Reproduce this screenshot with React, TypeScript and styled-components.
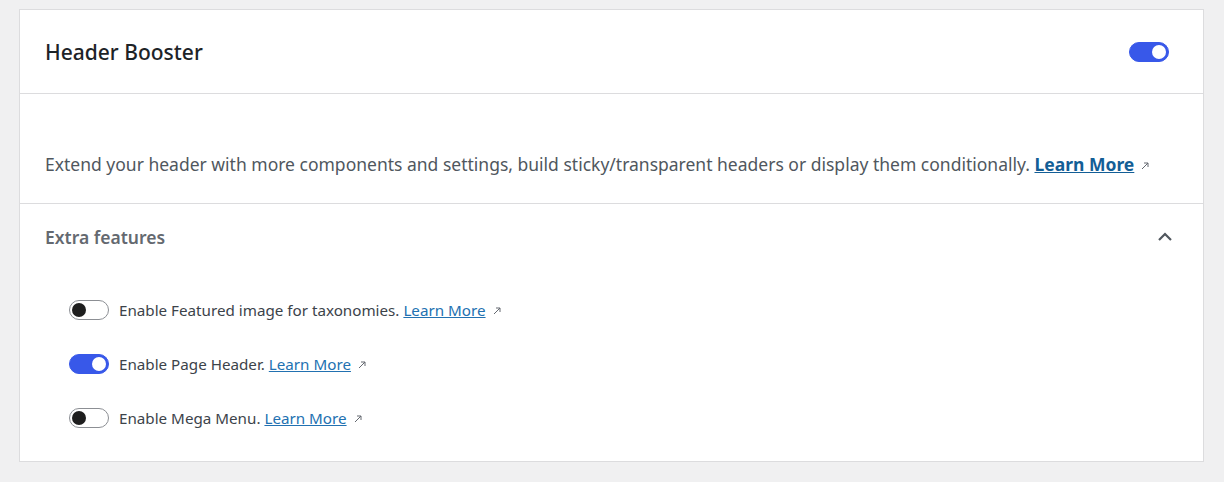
import styled, { createGlobalStyle } from "styled-components";

const GlobalStyle = createGlobalStyle`
  html, body {
    margin: 0;
    padding: 0;
    background: #f0f0f1;
    font-family: "Noto Sans", "Open Sans", sans-serif;
  }
`;

const features = [
  { label: "Enable Featured image for taxonomies.", on: false },
  { label: "Enable Page Header.", on: true },
  { label: "Enable Mega Menu.", on: false },
];

function ExternalArrow() {
  return (
    <svg width="10" height="10" viewBox="0 0 10 10" fill="none">
      <path d="M2 8L8 2M4 2h4v4" stroke="#646970" strokeWidth="1" />
    </svg>
  );
}

export default function App() {
  return (
    <>
      <GlobalStyle />
      <Page>
        <Card>
          <Header>
            <Title>Header Booster</Title>
            <Toggle $on={true} />
          </Header>
          <Description>
            Extend your header with more components and settings, build sticky/transparent headers or
            display them conditionally. <BigLink href="#">Learn More</BigLink>
            <ArrowWrap><ExternalArrow /></ArrowWrap>
          </Description>
          <Section>
            <SectionHead>
              <SectionTitle>Extra features</SectionTitle>
              <svg width="20" height="20" viewBox="0 0 20 20">
                <path d="M4 13l6-6 6 6" stroke="#50575e" strokeWidth="2.2" fill="none" />
              </svg>
            </SectionHead>
            <List>
              {features.map((f) => (
                <Row key={f.label}>
                  <Toggle $on={f.on} />
                  <RowText>
                    {f.label} <SmallLink href="#">Learn More</SmallLink>
                    <ArrowWrap><ExternalArrow /></ArrowWrap>
                  </RowText>
                </Row>
              ))}
            </List>
          </Section>
        </Card>
      </Page>
    </>
  );
}

const Page = styled.div`
  padding: 9px 20px 20px 19px;
`;

const Card = styled.div`
  background: #fff;
  border: 1px solid #dcdcde;
`;

const Header = styled.div`
  height: 83px;
  display: flex;
  align-items: center;
  justify-content: space-between;
  padding: 0 34px 0 25px;
  border-bottom: 1px solid #dcdcde;
`;

const Title = styled.div`
  font-size: 21px;
  font-weight: 500;
  color: #1d2327;
`;

const Toggle = styled.span<{ $on: boolean }>`
  position: relative;
  display: inline-block;
  flex-shrink: 0;
  box-sizing: border-box;
  width: 40px;
  height: 20px;
  border-radius: 10px;
  background: ${(p) => (p.$on ? "#3858e9" : "#fff")};
  border: 1px solid ${(p) => (p.$on ? "#3858e9" : "#8c8f94")};
  &::after {
    content: "";
    position: absolute;
    top: 2px;
    left: ${(p) => (p.$on ? "22px" : "2px")};
    width: 14px;
    height: 14px;
    border-radius: 50%;
    background: ${(p) => (p.$on ? "#fff" : "#1e1e1e")};
  }
`;

const Description = styled.div`
  padding: 58px 25px 27px;
  font-size: 17.5px;
  color: #50575e;
  border-bottom: 1px solid #dcdcde;
`;

const BigLink = styled.a`
  color: #135e96;
  font-weight: 700;
  text-decoration: underline;
`;

const ArrowWrap = styled.span`
  display: inline-block;
  margin-left: 6px;
`;

const Section = styled.div`
  padding-bottom: 33px;
`;

const SectionHead = styled.div`
  height: 66px;
  display: flex;
  align-items: center;
  justify-content: space-between;
  padding: 0 28px 0 25px;
`;

const SectionTitle = styled.div`
  font-size: 17.5px;
  font-weight: 600;
  color: #646970;
`;

const List = styled.div`
  display: flex;
  flex-direction: column;
  gap: 34px;
  padding: 30px 0 0 49px;
`;

const Row = styled.div`
  display: flex;
  align-items: center;
  gap: 10px;
  height: 20px;
`;

const RowText = styled.div`
  font-size: 15.2px;
  color: #3c434a;
`;

const SmallLink = styled.a`
  color: #2271b1;
  text-decoration: underline;
`;
